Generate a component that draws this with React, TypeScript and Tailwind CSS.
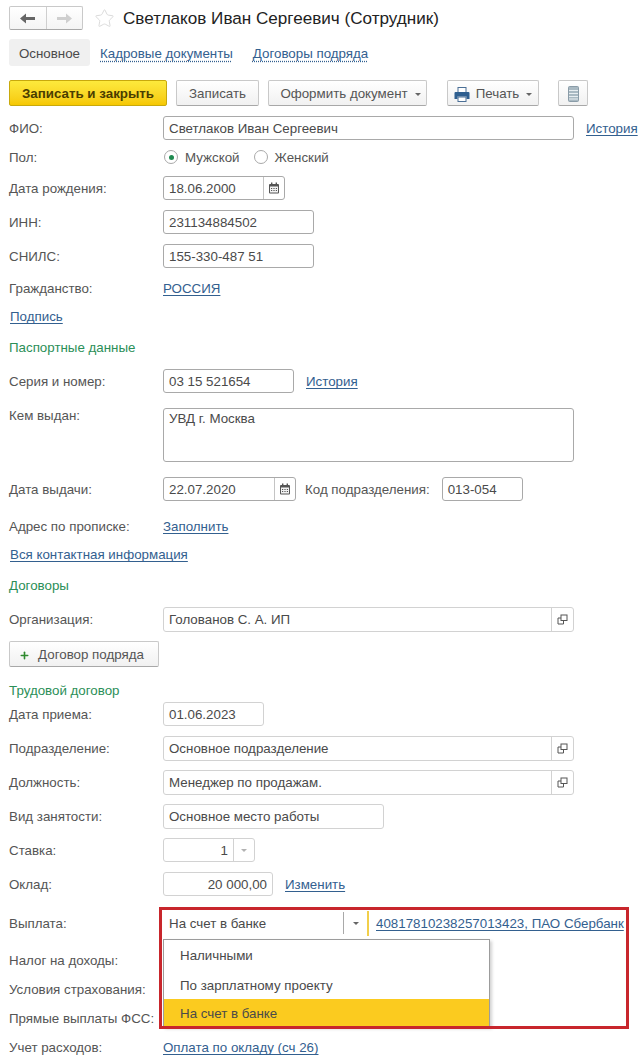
import type { ReactNode } from "react";
import { Star, Plus } from "lucide-react";

const fieldBorder = "border border-[#a9a9a9] rounded-[3px] bg-white";
const softBorder = "border border-[#d2d2d2] rounded-[3px] bg-white";

function Row({ label, className, children, top, tall }: { label?: string; className: string; children?: ReactNode; top?: boolean; tall?: boolean }) {
  return (
    <div className={`flex ${top ? "items-start" : "items-center"} ${className}`}>
      <div className={`w-[154px] shrink-0 text-[#555] ${top || tall ? "pt-[1px]" : "pt-[2px]"}`}>{label}</div>
      {children}
    </div>
  );
}

function Link({ children, className }: { children: ReactNode; className?: string }) {
  return <span className={`pt-[2px] text-[#33608f] underline underline-offset-2 ${className ?? ""}`}>{children}</span>;
}

function Section({ children, className }: { children: ReactNode; className: string }) {
  return <div className={`flex items-center h-5 pt-[2px] text-[#2b8f58] ${className}`}>{children}</div>;
}

function Input({ value, className, soft, right, tall }: { value: string; className: string; soft?: boolean; right?: boolean; tall?: boolean }) {
  return (
    <div className={`h-full flex items-center px-[5px] ${tall ? "pt-[1px]" : "pt-[2px]"} text-[#4a4a4a] ${soft ? softBorder : fieldBorder} ${right ? "justify-end" : ""} ${className}`}>
      {value}
    </div>
  );
}

function CalendarIcon() {
  return (
    <svg width="12" height="12" viewBox="0 0 12 12">
      <rect x="1" y="2" width="10" height="9.5" rx="1" fill="#555" />
      <rect x="2" y="4.5" width="8" height="6" fill="#f3f3f3" />
      <rect x="3" y="0.5" width="1.4" height="2.5" fill="#555" />
      <rect x="7.6" y="0.5" width="1.4" height="2.5" fill="#555" />
      <path d="M3 6h1.2v1H3zM5.4 6h1.2v1H5.4zM7.8 6H9v1H7.8zM3 8h1.2v1H3zM5.4 8h1.2v1H5.4zM7.8 8H9v1H7.8z" fill="#555" />
    </svg>
  );
}

function OpenIcon() {
  return (
    <svg width="11" height="11" viewBox="0 0 11 11" fill="none" stroke="#555" strokeWidth="1">
      <rect x="4" y="1" width="6" height="5.5" />
      <path d="M4 4H1v6h5.5V6.5" />
    </svg>
  );
}

function PrinterIcon() {
  return (
    <svg width="16" height="15" viewBox="0 0 16 15">
      <rect x="4" y="0.5" width="8" height="5" fill="#fff" stroke="#4a6f96" />
      <path d="M1.5 5h13a1 1 0 0 1 1 1v6h-3V9.5h-9V12H.5V6a1 1 0 0 1 1-1z" fill="#2f5f90" />
      <rect x="4" y="10" width="8" height="4.5" fill="#fff" stroke="#4a6f96" />
    </svg>
  );
}

function NavArrow({ color, flip }: { color: string; flip?: boolean }) {
  return (
    <svg width="15" height="11" viewBox="0 0 15 11" className={flip ? "-scale-x-100" : ""}>
      <path d="M0 5.5 6 0.5V4h9v3H6v3.5z" fill={color} />
    </svg>
  );
}

function DateInput({ value, className }: { value: string; className: string }) {
  return (
    <div className={`h-full flex ${fieldBorder} ${className}`}>
      <div className="flex-1 flex items-center px-[5px] pt-[2px] text-[#4a4a4a]">{value}</div>
      <div className="w-[21px] flex items-center justify-center border-l border-[#c4c4c4]">
        <CalendarIcon />
      </div>
    </div>
  );
}

function RefInput({ value }: { value: string }) {
  return (
    <div className={`h-full w-[411px] flex ${softBorder}`}>
      <div className="flex-1 flex items-center px-[5px] pt-[1px] text-[#4a4a4a]">{value}</div>
      <div className="w-[22px] flex items-center justify-center border-l border-[#d2d2d2]">
        <OpenIcon />
      </div>
    </div>
  );
}

function Button({ children, className }: { children: ReactNode; className: string }) {
  return (
    <div className={`h-[26px] flex items-center justify-center pt-[2px] rounded-[2px] border border-[#c9c9c9] border-b-[#a8a8a8] bg-gradient-to-b from-white to-[#f1f1f1] text-[#555] ${className}`}>
      {children}
    </div>
  );
}

function Caret({ className }: { className?: string }) {
  return <span className={`inline-block w-0 h-0 border-x-[3px] border-x-transparent border-t-[3px] border-t-[#666] ${className ?? ""}`} />;
}

export default function App() {
  return (
    <div className="relative w-[641px] h-[1062px] overflow-hidden bg-white pl-[9px] text-[13.33px] leading-none font-['Liberation_Sans',Arial,sans-serif]">
      {/* header */}
      <div className="flex items-center h-[36px]">
        <div className="flex h-[24px] w-[74px] rounded-[2px] border border-[#c9c9c9] border-b-[#a8a8a8] bg-gradient-to-b from-white to-[#f4f4f4]">
          <div className="flex-1 flex items-center justify-center border-r border-[#cfcfcf]">
            <NavArrow color="#666" />
          </div>
          <div className="flex-1 flex items-center justify-center">
            <NavArrow color="#cfcfcf" flip />
          </div>
        </div>
        <Star size={21} strokeWidth={1} color="#d6d6d6" className="ml-[11px]" />
        <div className="ml-[8px] pt-[1px] text-[17.1px] text-[#222]">Светлаков Иван Сергеевич (Сотрудник)</div>
      </div>

      {/* tabs */}
      <div className="mt-[3px] flex items-center h-[27px]">
        <div className="w-[81px] h-full flex items-center justify-center pt-[2px] rounded-[3px] bg-[#f0f0f0] text-[#4a4a4a]">Основное</div>
        <span className="ml-[10px] pt-[2px] text-[#33608f] underline decoration-dotted underline-offset-3">Кадровые документы</span>
        <span className="ml-[20px] pt-[2px] text-[#33608f] underline decoration-dotted underline-offset-3">Договоры подряда</span>
      </div>

      {/* toolbar */}
      <div className="mt-[14px] flex items-center">
        <div className="h-[26px] w-[158px] flex items-center justify-center pt-[2px] rounded-[2px] border border-[#c8a90c] bg-gradient-to-b from-[#fdea3c] to-[#f6c800] font-bold text-[#4a3d00]">
          Записать и закрыть
        </div>
        <Button className="ml-[9px] w-[83px]">Записать</Button>
        <Button className="ml-[9px] w-[159px] gap-[7px] pl-[6px]">
          Оформить документ <Caret />
        </Button>
        <Button className="ml-[20px] w-[92px] gap-[6px]">
          <PrinterIcon /> Печать <Caret className="ml-[1px]" />
        </Button>
        <Button className="ml-[19px] w-[30px]">
          <svg width="11" height="16" viewBox="0 0 11 16">
            <rect x="0.5" y="0.5" width="10" height="15" rx="1" fill="#a9b9c2" stroke="#8a9ca8" />
            <path d="M1 4.5h9M1 7.5h9M1 10.5h9M1 13h9" stroke="#e8eef1" />
          </svg>
        </Button>
      </div>

      {/* person */}
      <Row label="ФИО:" className="mt-[10px] h-[24px]">
        <Input value="Светлаков Иван Сергеевич" className="w-[411px]" />
        <Link className="ml-[12px]">История</Link>
      </Row>
      <Row label="Пол:" className="mt-[6px] h-[22px]">
        <span className="flex items-center justify-center w-[14px] h-[14px] ml-[1px] rounded-full border border-[#a9a9a9]">
          <span className="w-[5px] h-[5px] rounded-full bg-[#1f8a50]" />
        </span>
        <span className="ml-[7px] pt-[2px] text-[#555]">Мужской</span>
        <span className="ml-[15px] w-[14px] h-[14px] rounded-full border border-[#a9a9a9]" />
        <span className="ml-[6px] pt-[2px] text-[#555]">Женский</span>
      </Row>
      <Row label="Дата рождения:" className="mt-[8px] h-[24px]">
        <DateInput value="18.06.2000" className="w-[122px]" />
      </Row>
      <Row label="ИНН:" className="mt-[10px] h-[24px]">
        <Input value="231134884502" className="w-[151px]" />
      </Row>
      <Row label="СНИЛС:" className="mt-[10px] h-[24px]">
        <Input value="155-330-487 51" className="w-[151px]" />
      </Row>
      <Row label="Гражданство:" className="mt-[10px] h-[20px]">
        <Link>РОССИЯ</Link>
      </Row>
      <div className="mt-[8px] h-[20px] flex items-center pl-[1px]">
        <Link>Подпись</Link>
      </div>

      {/* passport */}
      <Section className="mt-[11px]">Паспортные данные</Section>
      <Row label="Серия и номер:" className="mt-[12px] h-[24px]">
        <Input value="03 15 521654" className="w-[131px]" />
        <Link className="ml-[12px]">История</Link>
      </Row>
      <Row label="Кем выдан:" className="mt-[15px] h-[54px]" top>
        <div className={`h-full w-[411px] px-[5px] pt-[3px] text-[#4a4a4a] ${fieldBorder}`}>УВД г. Москва</div>
      </Row>
      <Row label="Дата выдачи:" className="mt-[15px] h-[24px]">
        <DateInput value="22.07.2020" className="w-[133px]" />
        <span className="ml-[9px] pt-[2px] text-[#555]">Код подразделения:</span>
        <Input value="013-054" className="ml-[12px] w-[81px]" />
      </Row>
      <Row label="Адрес по прописке:" className="mt-[15px] h-[20px]">
        <Link>Заполнить</Link>
      </Row>
      <div className="mt-[8px] h-[20px] flex items-center pl-[1px]">
        <Link>Вся контактная информация</Link>
      </div>

      {/* contracts */}
      <Section className="mt-[11px]">Договоры</Section>
      <Row label="Организация:" className="mt-[12px] h-[25px]" tall>
        <RefInput value="Голованов С. А. ИП" />
      </Row>
      <Button className="mt-[9px] w-[150px] gap-[8px] pr-[5px]">
        <Plus size={11} strokeWidth={3.5} color="#2f8a2f" /> Договор подряда
      </Button>

      {/* employment */}
      <Section className="mt-[13px]">Трудовой договор</Section>
      <Row label="Дата приема:" className="mt-[2px] h-[24px]">
        <Input value="01.06.2023" soft className="w-[101px]" />
      </Row>
      <Row label="Подразделение:" className="mt-[10px] h-[25px]" tall>
        <RefInput value="Основное подразделение" />
      </Row>
      <Row label="Должность:" className="mt-[9px] h-[25px]" tall>
        <RefInput value="Менеджер по продажам." />
      </Row>
      <Row label="Вид занятости:" className="mt-[9px] h-[25px]" tall>
        <Input value="Основное место работы" soft tall className="w-[221px]" />
      </Row>
      <Row label="Ставка:" className="mt-[9px] h-[24px]">
        <div className={`h-full w-[92px] flex ${softBorder}`}>
          <div className="flex-1 flex items-center justify-end pr-[5px] pt-[2px] text-[#4a4a4a]">1</div>
          <div className="w-[21px] flex items-center justify-center border-l border-[#d2d2d2]">
            <Caret className="opacity-50" />
          </div>
        </div>
      </Row>
      <Row label="Оклад:" className="mt-[10px] h-[24px]">
        <Input value="20 000,00" soft right className="w-[110px]" />
        <Link className="ml-[12px]">Изменить</Link>
      </Row>
      <Row label="Выплата:" className="mt-[16px] h-[22px]">
        <div className="flex items-center w-[180px] h-full pl-[6px] pt-[2px] text-[#4a4a4a]">На счет в банке</div>
        <div className="flex items-center justify-center w-[24px] h-full border-l border-[#a9a9a9]">
          <Caret />
        </div>
        <div className="w-[2px] h-[25px] bg-[#f2cf4a]" />
        <Link className="ml-[7px]">40817810238257013423, ПАО Сбербанк</Link>
      </Row>
      <Row label="Налог на доходы:" className="mt-[16px] h-[20px]" />
      <Row label="Условия страхования:" className="mt-[9px] h-[20px]" />
      <Row label="Прямые выплаты ФСС:" className="mt-[9px] h-[20px]" />
      <Row label="Учет расходов:" className="mt-[9px] h-[20px]">
        <Link>Оплата по окладу (сч 26)</Link>
      </Row>

      {/* open dropdown */}
      <div className="absolute left-[163px] top-[939px] w-[327px] h-[88px] bg-white border border-[#9c9c9c] shadow-[2px_2px_3px_rgba(0,0,0,0.18)] text-[#4a4a4a]">
        <div className="h-[30px] flex items-center pl-[16px] pt-[2px]">Наличными</div>
        <div className="h-[29px] flex items-center pl-[16px] pt-[2px]">По зарплатному проекту</div>
        <div className="h-[27px] flex items-center pl-[16px] pt-[2px] bg-[#fbcb1f]">На счет в банке</div>
      </div>

      {/* red annotation frame */}
      <div className="absolute left-[159px] top-[907px] w-[470px] h-[122px] border-[3px] border-[#c8262c]" />
    </div>
  );
}
